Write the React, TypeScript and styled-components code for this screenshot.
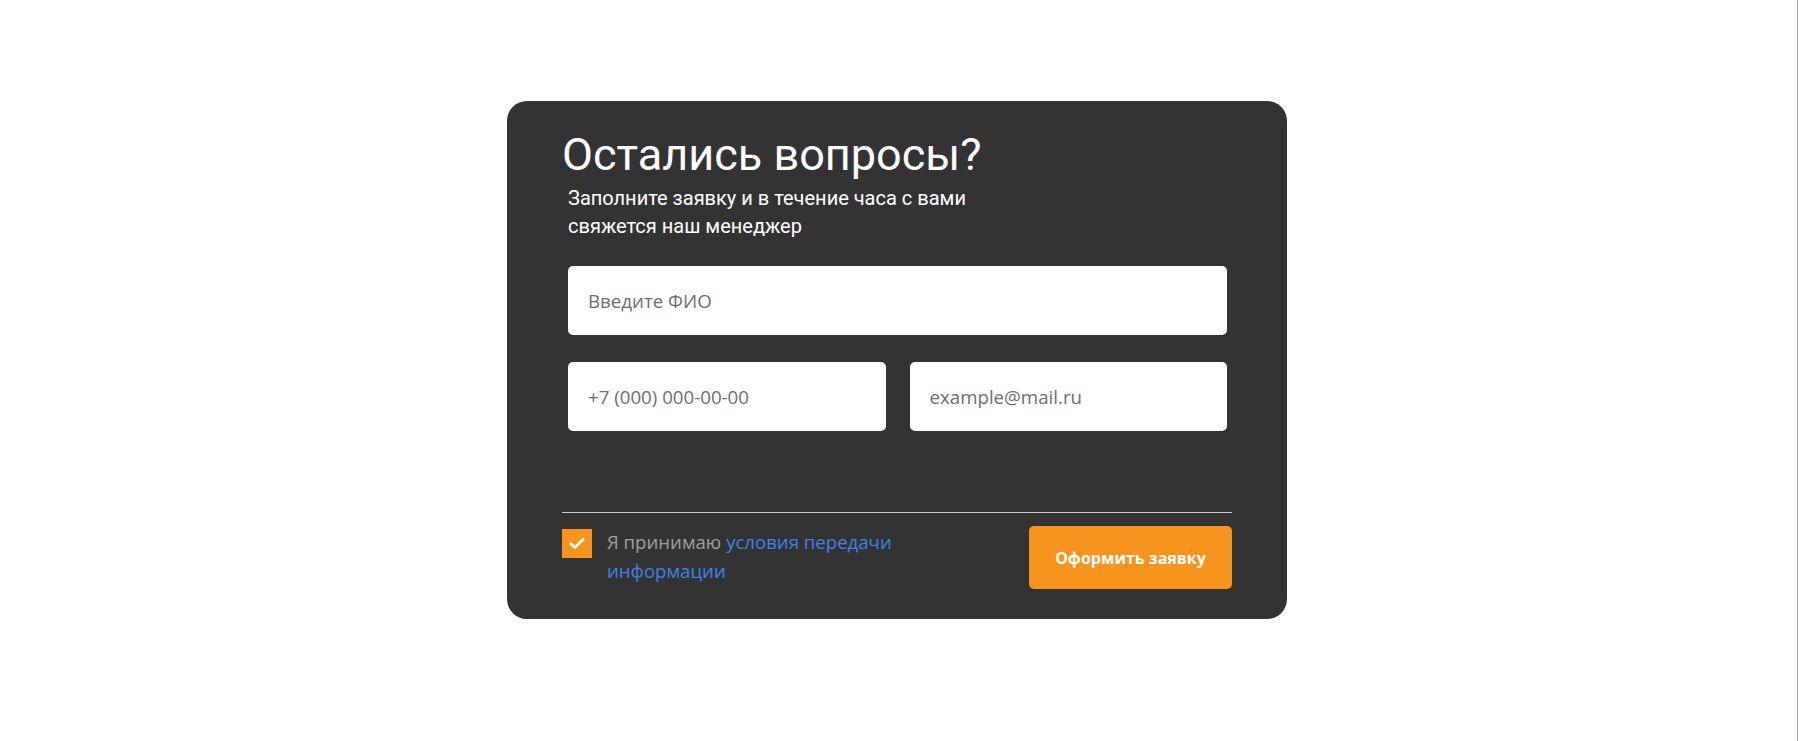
import React, { useState } from 'react';
import styled, { createGlobalStyle } from 'styled-components';

const GlobalStyle = createGlobalStyle`
  html {
    border-right: 1px solid #a3a3a3;
    background: #ffffff;
  }
  body {
    margin: 0;
    font-family: 'Open Sans', 'Liberation Sans', sans-serif;
  }
  * {
    box-sizing: border-box;
  }
`;

const Page = styled.div`
  display: flex;
  justify-content: center;
  align-items: flex-start;
  padding: 101px 3px 0 0;
  min-height: 741px;
`;

const Card = styled.form`
  width: 780px;
  padding: 27px 55px 30px;
  background: #333333;
  border-radius: 20px;
`;

const Title = styled.h2`
  margin: 0;
  font-family: Roboto, 'Liberation Sans', sans-serif;
  font-weight: 400;
  font-size: 45px;
  line-height: 54px;
  color: #ffffff;
`;

const Subtitle = styled.p`
  margin: 2px 0 0 6px;
  max-width: 420px;
  font-family: Roboto, 'Liberation Sans', sans-serif;
  font-size: 20px;
  line-height: 28px;
  color: #ffffff;
`;

const Fields = styled.div`
  display: grid;
  grid-template-columns: 1fr 1fr;
  column-gap: 24px;
  row-gap: 27px;
  margin-top: 26px;
  padding: 0 5px 0 6px;
`;

const Input = styled.input<{ $wide?: boolean }>`
  grid-column: ${(props) => (props.$wide ? '1 / -1' : 'auto')};
  width: 100%;
  height: 69px;
  padding: 0 20px;
  border: none;
  border-radius: 5px;
  background: #ffffff;
  font-family: 'Open Sans', 'Liberation Sans', sans-serif;
  font-size: 18.7px;
  color: #333333;
  outline: none;

  &::placeholder {
    color: #6e6e6e;
  }
`;

const Divider = styled.hr`
  margin: 81px 0 0;
  border: none;
  border-top: 1px solid #cccccc;
`;

const Footer = styled.div`
  display: flex;
  justify-content: space-between;
  align-items: flex-start;
  padding-top: 13px;
`;

const Consent = styled.label`
  display: flex;
  align-items: flex-start;
  gap: 15px;
  cursor: pointer;
`;

const HiddenCheck = styled.input`
  display: none;
`;

const Box = styled.span<{ $checked: boolean }>`
  display: flex;
  align-items: center;
  justify-content: center;
  flex-shrink: 0;
  width: 30px;
  height: 29px;
  margin-top: 3px;
  background: ${(props) => (props.$checked ? '#f7941e' : '#ffffff')};
`;

const ConsentText = styled.span`
  max-width: 310px;
  margin-top: 1px;
  font-family: 'Open Sans', 'Liberation Sans', sans-serif;
  font-size: 18.6px;
  line-height: 29px;
  color: #9f9f9f;
`;

const Link = styled.a`
  color: #3f82e4;
  text-decoration: none;
`;

const Submit = styled.button`
  width: 203px;
  height: 63px;
  border: none;
  border-radius: 5px;
  background: #f7941e;
  font-family: 'Open Sans', 'Liberation Sans', sans-serif;
  font-weight: 700;
  font-size: 16px;
  color: #ffffff;
  cursor: pointer;
`;

const App = (): JSX.Element => {
  const [agreed, setAgreed] = useState(true);

  return (
    <>
      <GlobalStyle />
      <Page>
        <Card onSubmit={(e) => e.preventDefault()}>
          <Title>Остались вопросы?</Title>
          <Subtitle>Заполните заявку и в течение часа с вами свяжется наш менеджер</Subtitle>
          <Fields>
            <Input $wide placeholder="Введите ФИО" />
            <Input type="tel" placeholder="+7 (000) 000-00-00" />
            <Input type="email" placeholder="example@mail.ru" />
          </Fields>
          <Divider />
          <Footer>
            <Consent>
              <HiddenCheck type="checkbox" checked={agreed} onChange={() => setAgreed(!agreed)} />
              <Box $checked={agreed}>
                {agreed && (
                  <svg width="16" height="13" viewBox="0 0 16 13" fill="none">
                    <path d="M2 7 L6 10.5 L14 2.5" stroke="#ffffff" strokeWidth="2.8" strokeLinecap="round" strokeLinejoin="round" />
                  </svg>
                )}
              </Box>
              <ConsentText>
                Я принимаю <Link href="#">условия передачи информации</Link>
              </ConsentText>
            </Consent>
            <Submit type="submit">Оформить заявку</Submit>
          </Footer>
        </Card>
      </Page>
    </>
  );
};

export default App;
